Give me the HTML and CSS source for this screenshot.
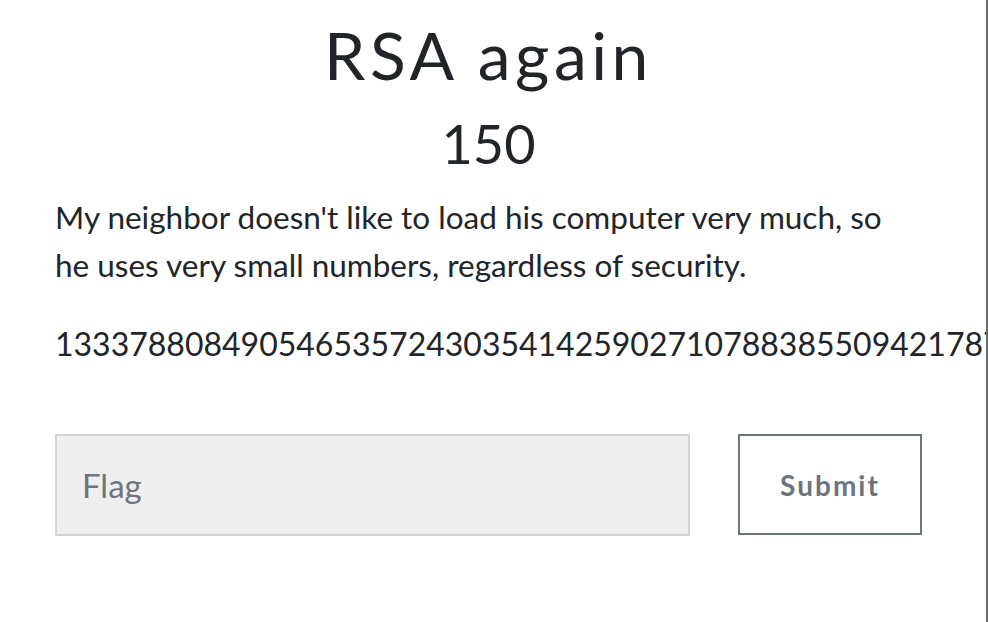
FILE: index.html
```html
<!DOCTYPE html>
<html>
<head>
<meta charset="utf-8">
<link rel="stylesheet" href="styles.css">
</head>
<body>
<div class="page">
  <div class="content">
    <h1 class="title">RSA again</h1>
    <div class="points">150</div>
    <p class="desc">My neighbor doesn't like to load his computer very much, so he uses very small numbers, regardless of security.</p>
    <p class="num">1333788084905465357243035414259027107883855094217871234567890123456789</p>
    <form class="flag-form">
      <input class="flag-input" type="text" placeholder="Flag">
      <button class="submit-btn" type="button">Submit</button>
    </form>
  </div>
</div>
</body>
</html>
```
FILE: styles.css
```css
html, body {
  margin: 0;
  padding: 0;
  background: #fff;
}
.page {
  width: 986px;
  height: 622px;
  border-right: 2px solid #6b6b6b;
  overflow: hidden;
  font-family: Lato, "Liberation Sans", sans-serif;
  color: #212529;
}
.content {
  width: 867px;
  margin-left: 55px;
  padding-top: 15px;
}
.title {
  margin: 0;
  font-family: Lato, sans-serif;
  font-weight: 400;
  font-size: 66px;
  line-height: 80px;
  text-align: center;
  letter-spacing: 4.5px;
}
.points {
  margin-top: 17px;
  font-size: 54px;
  line-height: 64px;
  text-align: center;
}
.desc {
  margin: 17px 0 0;
  font-size: 31.5px;
  line-height: 48px;
  max-width: 850px;
}
.num {
  margin: 31px 0 0;
  font-size: 32px;
  line-height: 48px;
  white-space: nowrap;
}
.flag-form {
  display: flex;
  gap: 48px;
  margin-top: 66px;
}
.flag-input {
  flex-shrink: 0;
  box-sizing: border-box;
  width: 635px;
  height: 102px;
  border: 2px solid #d0d3d7;
  background: #efefef;
  padding: 0 25px;
  font-family: Lato, sans-serif;
  font-size: 33px;
  color: #495057;
  outline: none;
}
.flag-input::placeholder {
  color: #6c757d;
}
.submit-btn {
  flex-shrink: 0;
  box-sizing: border-box;
  width: 184px;
  height: 101px;
  border: 2px solid #6c757d;
  background: #fff;
  color: #6c757d;
  font-family: Lato, sans-serif;
  font-weight: 700;
  font-size: 28px;
  letter-spacing: 2px;
  padding: 0;
}
```
